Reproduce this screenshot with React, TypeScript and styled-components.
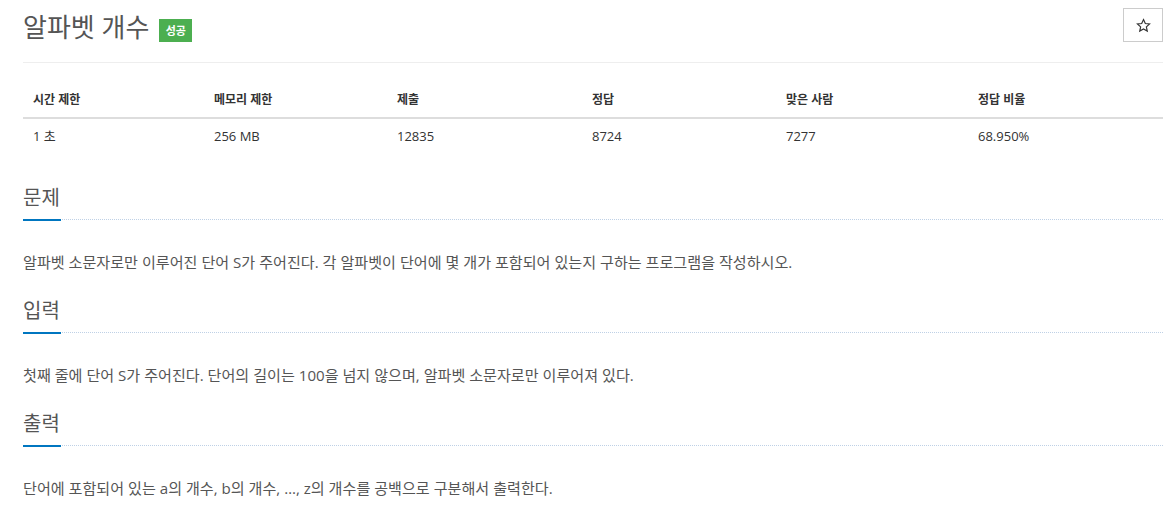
import React from "react";
import styled, { createGlobalStyle } from "styled-components";

const Global = createGlobalStyle`
  html, body { margin: 0; padding: 0; background: #fff; }
  body { font-family: "Open Sans", "Noto Sans CJK KR", sans-serif; color: #333; }
`;

const Page = styled.div`
  padding: 8px 10px 0 23px;
  display: flex;
  flex-direction: column;
`;

const TitleRow = styled.div`
  display: flex;
  align-items: flex-start;
  justify-content: space-between;
  padding-bottom: 20px;
  border-bottom: 1px solid #eee;
`;

const TitleGroup = styled.div`
  display: flex;
  align-items: center;
  gap: 10px;
  padding-top: 4px;
`;

const Title = styled.h1`
  margin: 0;
  font-size: 26px;
  font-weight: 400;
  line-height: 30px;
  color: #555;
`;

const Badge = styled.span`
  display: inline-flex;
  align-items: center;
  justify-content: center;
  width: 33px;
  height: 23px;
  margin-top: 6px;
  background: #4caf50;
  color: #fff;
  font-size: 11px;
  font-weight: 700;
`;

const StarButton = styled.button`
  width: 40px;
  height: 34px;
  border: 1px solid #ccc;
  background: #fff;
  color: #333;
  padding: 0;
  display: flex;
  align-items: center;
  justify-content: center;
`;

const Table = styled.table`
  width: 100%;
  border-collapse: collapse;
  margin-top: 20px;
  margin-bottom: 8px;
  table-layout: fixed;
  font-size: 13px;
`;

const Th = styled.th<{ w: number }>`
  width: ${(p) => p.w - 20}px;
  text-align: left;
  font-weight: 700;
  font-size: 12px;
  color: #333;
  padding: 8px 10px;
  line-height: 18px;
  border-bottom: 2px solid #ddd;
`;

const Td = styled.td`
  padding: 8px 10px;
  line-height: 18px;
  color: #333;
`;

const Section = styled.section`
  margin-top: 23px;
`;

const Headline = styled.div`
  border-bottom: 1px dotted #bfd1e6;
  display: flex;
`;

const HeadText = styled.h2`
  margin: 0 0 -2px 0;
  font-size: 20px;
  font-weight: 400;
  color: #555;
  line-height: 28px;
  padding: 0 1px 7px 0;
  border-bottom: 2px solid #0076c0;
`;

const Para = styled.p`
  margin: 0;
  padding-top: 30px;
  font-size: 15.1px;
  line-height: 24px;
  color: #555;
`;

const StarIcon = () => (
  <svg width="15" height="15" viewBox="0 0 24 24" fill="none" stroke="currentColor" strokeWidth="1.9" strokeLinejoin="miter">
    <path d="M12 2.5l2.9 6.3 6.8.8-5.1 4.6 1.4 6.8L12 17.6 6 21l1.4-6.8-5.1-4.6 6.8-.8z" />
  </svg>
);

const cols = [
  { h: "시간 제한", v: "1 초", w: 181 },
  { h: "메모리 제한", v: "256 MB", w: 183 },
  { h: "제출", v: "12835", w: 195 },
  { h: "정답", v: "8724", w: 194 },
  { h: "맞은 사람", v: "7277", w: 192 },
  { h: "정답 비율", v: "68.950%", w: 195 },
];

const sections = [
  {
    t: "문제",
    p: "알파벳 소문자로만 이루어진 단어 S가 주어진다. 각 알파벳이 단어에 몇 개가 포함되어 있는지 구하는 프로그램을 작성하시오.",
  },
  {
    t: "입력",
    p: "첫째 줄에 단어 S가 주어진다. 단어의 길이는 100을 넘지 않으며, 알파벳 소문자로만 이루어져 있다.",
  },
  {
    t: "출력",
    p: "단어에 포함되어 있는 a의 개수, b의 개수, …, z의 개수를 공백으로 구분해서 출력한다.",
  },
];

export default function App() {
  return (
    <>
      <Global />
      <Page>
        <TitleRow>
          <TitleGroup>
            <Title>알파벳 개수</Title>
            <Badge>성공</Badge>
          </TitleGroup>
          <StarButton aria-label="즐겨찾기">
            <StarIcon />
          </StarButton>
        </TitleRow>
        <Table>
          <thead>
            <tr>
              {cols.map((c) => (
                <Th key={c.h} w={c.w}>
                  {c.h}
                </Th>
              ))}
            </tr>
          </thead>
          <tbody>
            <tr>
              {cols.map((c) => (
                <Td key={c.h}>{c.v}</Td>
              ))}
            </tr>
          </tbody>
        </Table>
        {sections.map((s) => (
          <Section key={s.t}>
            <Headline>
              <HeadText>{s.t}</HeadText>
            </Headline>
            <Para>{s.p}</Para>
          </Section>
        ))}
      </Page>
    </>
  );
}
